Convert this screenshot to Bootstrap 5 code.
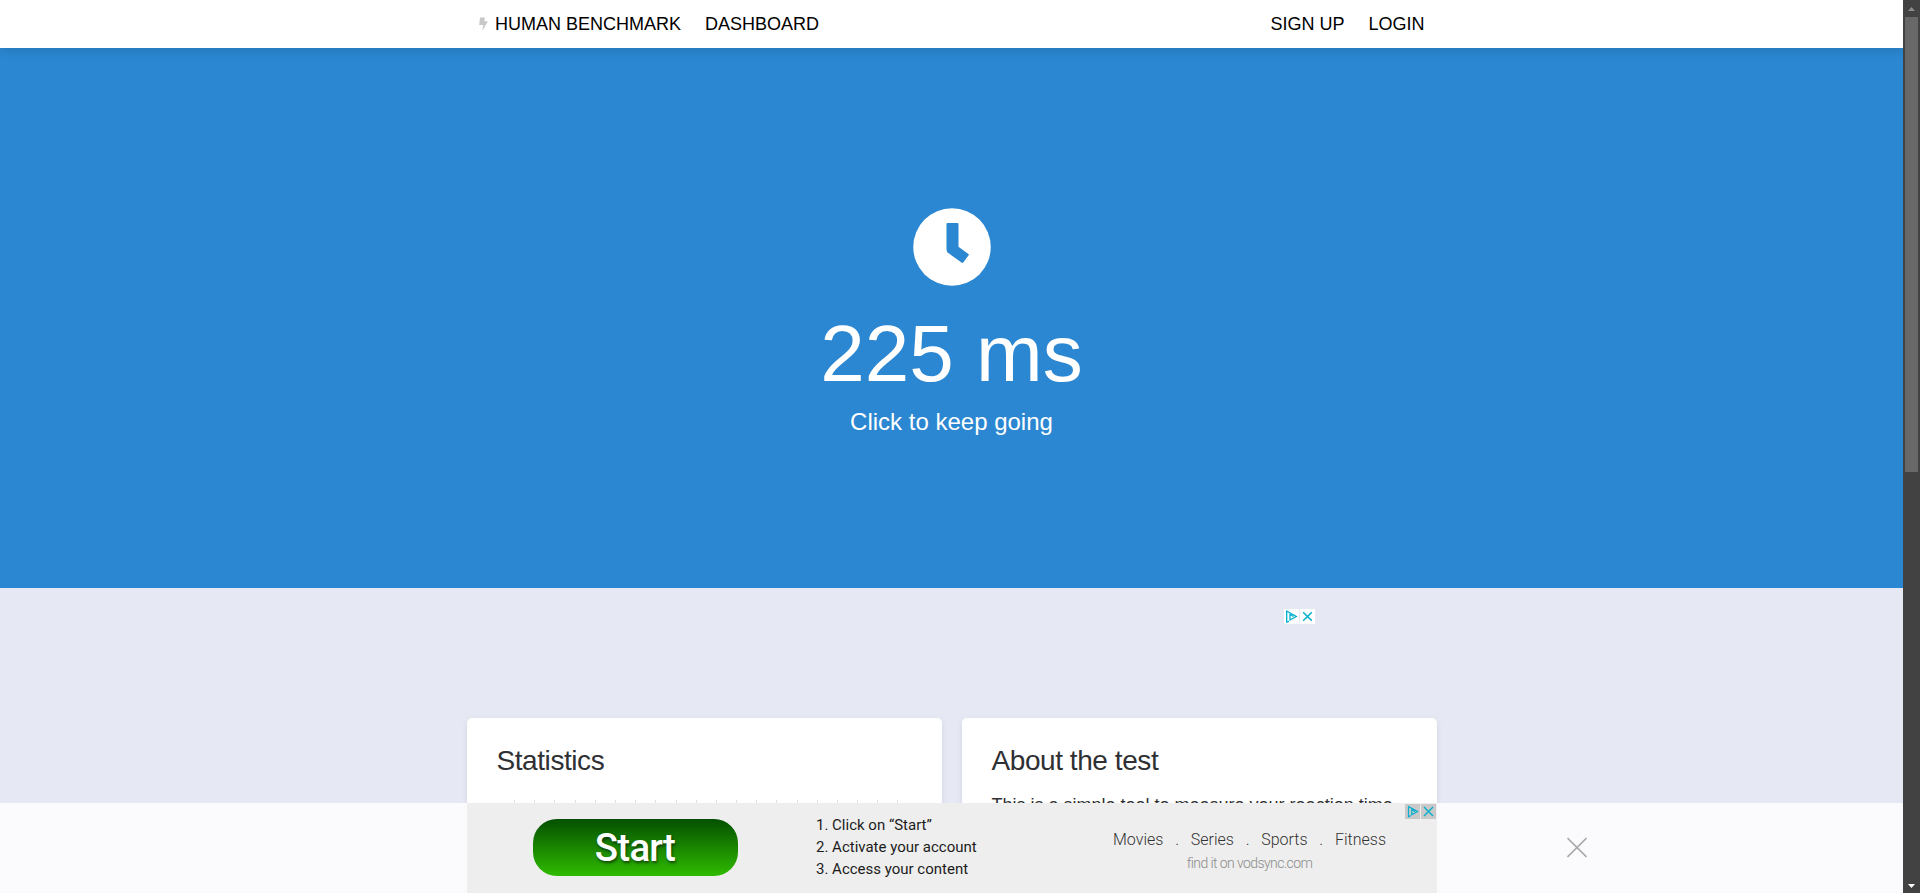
<!DOCTYPE html>
<html lang="en">
<head>
<meta charset="utf-8">
<title>Human Benchmark - Reaction Time Test</title>
<link href="https://cdn.jsdelivr.net/npm/bootstrap@5.3.0/dist/css/bootstrap.min.css" rel="stylesheet">
<style>
html, body { height: 100%; overflow: hidden; }
body { font-family: "Liberation Sans", Arial, sans-serif; color: #2f3033; background: #e6e8f4; }
.page { overflow: hidden; }
.wrap { width: 970px; margin: 0 auto; }
.topbar { height: 48px; background: #fff; box-shadow: 0 2px 10px rgba(0,0,0,.14); position: relative; z-index: 2; }
.topbar a { color: #000; font-size: 18px; line-height: 48px; text-transform: uppercase; text-decoration: none; padding: 0 12px; }
.hero { height: 540px; background: #2b87d1; color: #fff; padding-top: 159px; }
.hero h1 { font-size: 80px; line-height: 100px; font-weight: 400; margin: 17px 0 0; }
.hero p { font-size: 24px; line-height: 36px; margin: 0; }
.adslot { height: 130px; padding: 20.5px 122px 0 0; gap: 1px; }
.chip { width: 15px; height: 15px; background: #fff; display: block; }
.panel { width: 475px; height: 300px; background: #fff; border-radius: 5px; box-shadow: 0 2px 6px rgba(0,0,0,.08); padding: 24px 30px; }
.panel h2 { font-size: 28px; line-height: 38px; font-weight: 400; margin: 0; letter-spacing: -.43px; }
.panel p { font-size: 18px; line-height: 27px; margin: 12px 0 0; white-space: nowrap; }
.chart { display: block; margin-top: 20px; }
.anchor { height: 90px; width: 1903px; background: #fbfbfe; z-index: 5; }
.banner { height: 90px; background: #eee; font-family: Roboto, sans-serif; position: relative; }
.start { width: 205px; height: 57px; margin: 16px 0 0 66px; border-radius: 24px; background: linear-gradient(#045000, #2fbb00); color: #fff; font-size: 38.5px; line-height: 57px; font-weight: 500; letter-spacing: -.8px; text-shadow: 1px 2px 3px rgba(0,0,0,.55); }
.steps { margin: 11px 0 0 78.5px; width: 200px; font-size: 15px; line-height: 22px; color: #1c1c1c; }
.topics { margin: 25px 0 0 97px; width: 273px; font-weight: 300; font-size: 16px; line-height: 24px; color: #333; }
.topics small { display: block; font-size: 14px; line-height: 22px; color: #8c8c8c; letter-spacing: -.58px; font-weight: 300; }
.adchips { position: absolute; top: 1px; right: 1px; gap: 1px; }
.adchips .chip { background: #c9c9c9; }
.dismiss { position: absolute; left: 1567px; top: 34px; }
.rail { width: 17px; background: #424242; flex: none; }
.thumb { width: 13px; height: 455px; background: #686868; margin: 0 auto; }
</style>
</head>
<body>
<div class="d-flex h-100">
  <div class="page flex-grow-1 position-relative">
    <nav class="topbar">
      <div class="wrap d-flex">
        <a href="#" class="d-flex align-items-center"><svg width="9" height="14" viewBox="0 0 9 14" style="margin-right:7.5px"><path fill="#c8c8c8" d="M1 .5h5L5.3 4.2h3.5L3.4 14 4.2 8H.2z"/></svg>Human Benchmark</a>
        <a href="#">Dashboard</a>
        <a href="#" class="ms-auto">Sign up</a>
        <a href="#">Login</a>
      </div>
    </nav>
    <section class="hero text-center">
      <svg class="d-block mx-auto" width="80" height="80" viewBox="0 0 80 80"><circle cx="40" cy="40" r="38.75" fill="#fff"/><path fill="#2b87d1" stroke="#2b87d1" stroke-width="2" stroke-linejoin="round" d="M35.5 17h10v23.3l10.3 7.4-5.4 7.3-13.4-9.7q-1.5-1-1.5-2.7z"/></svg>
      <h1>225 ms</h1>
      <p>Click to keep going</p>
    </section>
    <div class="wrap">
      <div class="adslot d-flex justify-content-end">
        <svg class="chip" viewBox="0 0 15 15"><g fill="none" stroke="#00aecd" stroke-width="1.3"><path d="M5 12.3 2.7 13V2L12.3 7.5 6 11V5.5L9.5 7.5"/></g></svg>
        <svg class="chip" viewBox="0 0 15 15"><path d="M3.2 3.2l8.6 8.6M11.8 3.2l-8.6 8.6" stroke="#00aecd" stroke-width="1.5"/></svg>
      </div>
      <div class="d-flex justify-content-between">
        <section class="panel">
          <h2>Statistics</h2>
          <svg class="chart" width="415" height="180"><path fill="none" stroke="#e2e2e2" d="M17.5 0v180M37.5 0v180M57.5 0v180M78.5 0v180M98.5 0v180M118.5 0v180M138.5 0v180M158.5 0v180M179.5 0v180M199.5 0v180M219.5 0v180M239.5 0v180M259.5 0v180M279.5 0v180M300.5 0v180M320.5 0v180M340.5 0v180M360.5 0v180M380.5 0v180M400.5 0v180"/></svg>
        </section>
        <section class="panel">
          <h2>About the test</h2>
          <p>This is a simple tool to measure your reaction time.</p>
        </section>
      </div>
    </div>
    <div class="anchor position-absolute bottom-0 start-0">
      <div class="wrap banner d-flex">
        <div class="start text-center">Start</div>
        <div class="steps">1. Click on “Start”<br>2. Activate your account<br>3. Access your content</div>
        <div class="topics">
          <div class="d-flex justify-content-between"><span>Movies</span><span>.</span><span>Series</span><span>.</span><span>Sports</span><span>.</span><span>Fitness</span></div>
          <small class="text-center">find it on vodsync.com</small>
        </div>
        <div class="adchips d-flex">
          <svg class="chip" viewBox="0 0 15 15"><g fill="none" stroke="#00aecd" stroke-width="1.2"><path d="M5.5 11.6 3.5 12.7V2.5L12.5 7.5 6.8 10.8V5.5L10 7.5"/></g></svg>
          <svg class="chip" viewBox="0 0 15 15"><path d="M3 3l9 9M12 3l-9 9" stroke="#00aecd" stroke-width="1.4"/></svg>
        </div>
      </div>
      <svg class="dismiss" width="20" height="21" viewBox="0 0 20 21"><path d="M.5 1l19 19M19.5 1l-19 19" stroke="#a9a9a9" stroke-width="1.6"/></svg>
    </div>
  </div>
  <div class="rail d-flex flex-column">
    <svg width="17" height="17" class="flex-shrink-0"><path fill="#8b8b8b" d="M5 11h7L8.5 7z"/></svg>
    <div class="thumb"></div>
    <svg width="17" height="17" class="mt-auto flex-shrink-0"><path fill="#fff" d="M5 8h7l-3.5 4z"/></svg>
  </div>
</div>
<script src="https://cdn.jsdelivr.net/npm/bootstrap@5.3.0/dist/js/bootstrap.bundle.min.js"></script>
</body>
</html>
